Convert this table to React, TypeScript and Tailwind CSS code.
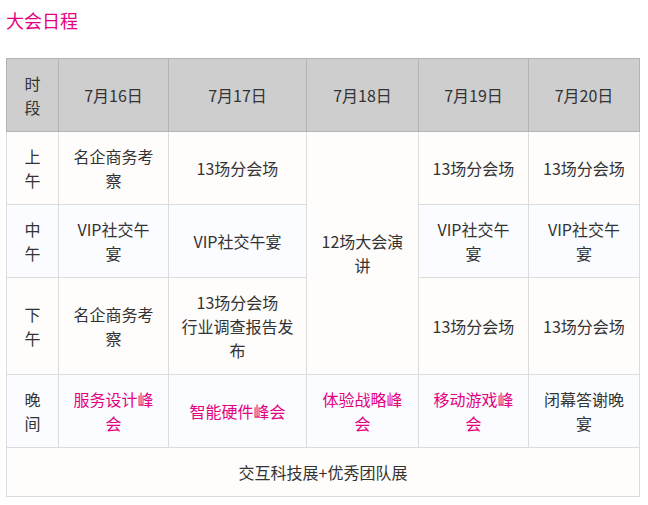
import React from 'react'

const pink = 'text-[#e4007f]'

type Cell = { text: string; hot?: boolean; rowSpan?: number }

const rows: { label: string; bg: string; cells: Cell[] }[] = [
  {
    label: '上午',
    bg: 'bg-[#fffdfb]',
    cells: [
      { text: '名企商务考察' },
      { text: '13场分会场' },
      { text: '12场大会演讲', rowSpan: 3 },
      { text: '13场分会场' },
      { text: '13场分会场' },
    ],
  },
  {
    label: '中午',
    bg: 'bg-[#fafcff]',
    cells: [
      { text: 'VIP社交午宴' },
      { text: 'VIP社交午宴' },
      { text: 'VIP社交午宴' },
      { text: 'VIP社交午宴' },
    ],
  },
  {
    label: '下午',
    bg: 'bg-[#fffdfb]',
    cells: [
      { text: '名企商务考察' },
      { text: '13场分会场\n行业调查报告发布' },
      { text: '13场分会场' },
      { text: '13场分会场' },
    ],
  },
  {
    label: '晚间',
    bg: 'bg-[#fafcff]',
    cells: [
      { text: '服务设计峰会', hot: true },
      { text: '智能硬件峰会', hot: true },
      { text: '体验战略峰会', hot: true },
      { text: '移动游戏峰会', hot: true },
      { text: '闭幕答谢晚宴' },
    ],
  },
]

const days = ['7月16日', '7月17日', '7月18日', '7月19日', '7月20日']

const App = () => {
  return (
    <div
      className="w-[648px] h-[505px] bg-white px-[6px] pt-[8px] text-[#333]"
      style={{ fontFamily: '"Noto Sans CJK SC", "Noto Sans", sans-serif' }}
    >
      <h2 className={`text-[18px] leading-[24px] ${pink}`}>大会日程</h2>

      <table className="mt-[26px] w-[634px] table-fixed border-collapse text-[16px] leading-[24px] text-center">
        <colgroup>
          <col className="w-[52px]" />
          <col className="w-[110px]" />
          <col className="w-[138px]" />
          <col className="w-[112px]" />
          <col className="w-[110px]" />
          <col className="w-[111px]" />
        </colgroup>
        <thead>
          <tr className="bg-[#cecece]">
            <th className="border border-[#b3b3b3] px-[12px] py-[12px] font-normal">时段</th>
            {days.map((d) => (
              <th key={d} className="border border-[#b3b3b3] px-[12px] py-[12px] font-normal">
                {d}
              </th>
            ))}
          </tr>
        </thead>
        <tbody>
          {rows.map((r) => (
            <tr key={r.label} className={r.bg}>
              <td className="border border-[#dcdcdc] px-[12px] py-[12px]">{r.label}</td>
              {r.cells.map((c, i) => (
                <td
                  key={i}
                  rowSpan={c.rowSpan}
                  className={`border border-[#dcdcdc] px-[12px] py-[12px] whitespace-pre-line ${
                    c.hot ? pink : ''
                  } ${c.rowSpan ? 'bg-[#fffdfb]' : r.bg}`}
                >
                  {c.text}
                </td>
              ))}
            </tr>
          ))}
          <tr className="bg-[#fffdfb]">
            <td colSpan={6} className="border border-[#dcdcdc] px-[12px] py-[12px]">
              交互科技展+优秀团队展
            </td>
          </tr>
        </tbody>
      </table>
    </div>
  )
}

export default App
